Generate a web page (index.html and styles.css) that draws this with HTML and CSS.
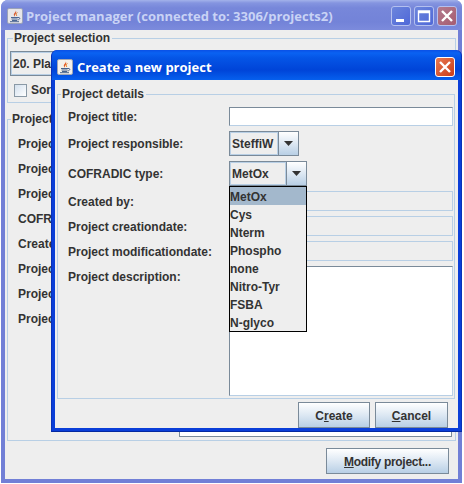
FILE: index.html
```html
<!DOCTYPE html>
<html lang="en">
<head>
    <meta charset="UTF-8">
    <title>Project manager</title>
    <link rel="stylesheet" href="styles.css">
</head>
<body>
    <svg class="defs" width="0" height="0">
        <defs>
            <symbol id="java" viewBox="0 0 16 16">
                <rect x="0.5" y="0.5" width="15" height="15" rx="1.5" fill="#f4f1ea" stroke="#9fa6b5"/>
                <path d="M8.5 2 C10 4 6 5 7 7.5 C7.5 8.5 8 8.5 8 8.5 C7 6.5 11 5.5 8.5 2 Z" fill="#e2571e"/>
                <path d="M10.5 4.5 C9 5.5 9 6.5 9.8 8" fill="none" stroke="#ee8a2c" stroke-width="1"/>
                <path d="M4 9.5 H11 M4.5 11 H10.5 M5 12.5 H10" stroke="#47638c" stroke-width="1" fill="none"/>
                <path d="M11 9.5 C13.5 9 13.5 11.5 10.5 12 M3 13.7 H12" stroke="#47638c" stroke-width="1" fill="none"/>
            </symbol>
            <symbol id="arrow" viewBox="0 0 9 5">
                <path d="M0 0 H9 L4.5 5 Z" fill="#333"/>
            </symbol>
        </defs>
    </svg>

    <div class="window">
        <div class="titlebar">
            <svg class="app-icon"><use href="#java"/></svg>
            <span class="title">Project manager (connected to: 3306/projects2)</span>
            <div class="title-buttons">
                <div class="tbtn">
                    <svg viewBox="0 0 18 18"><rect x="4" y="12" width="8" height="3" fill="#fff"/></svg>
                </div>
                <div class="tbtn">
                    <svg viewBox="0 0 18 18"><path d="M3.5 4 H14.5 V14.5 H3.5 Z M3.5 5.5 H14.5" fill="none" stroke="#fff" stroke-width="1.4"/></svg>
                </div>
                <div class="tbtn tbtn-close">
                    <svg viewBox="0 0 18 18"><path d="M4 4 L14 14 M14 4 L4 14" stroke="#fff" stroke-width="2.4"/></svg>
                </div>
            </div>
        </div>
        <div class="window-body">
            <fieldset class="group group-selection">
                <legend>Project selection</legend>
                <div class="combo combo-project">
                    <div class="combo-value">20. Plat</div>
                </div>
                <label class="check"><span class="checkbox"></span>Sort</label>
            </fieldset>
            <fieldset class="group group-project">
                <legend>Project</legend>
                <div class="outer-form">
                    <div class="outer-labels">
                        <div>Project</div>
                        <div>Project</div>
                        <div>Project</div>
                        <div>COFRAD</div>
                        <div>Created</div>
                        <div>Project</div>
                        <div>Project</div>
                        <div>Project</div>
                    </div>
                    <div class="outer-text"></div>
                </div>
            </fieldset>
            <div class="window-actions">
                <button class="btn btn-modify"><u>M</u>odify project...</button>
            </div>
        </div>
    </div>

    <div class="dialog">
        <div class="titlebar dialog-titlebar">
            <svg class="app-icon"><use href="#java"/></svg>
            <span class="title">Create a new project</span>
            <div class="title-buttons">
                <div class="tbtn tbtn-close">
                    <svg viewBox="0 0 18 18"><path d="M4 4 L14 14 M14 4 L4 14" stroke="#fff" stroke-width="2.4"/></svg>
                </div>
            </div>
        </div>
        <div class="dialog-body">
            <fieldset class="group group-details">
                <legend>Project details</legend>
                <div class="form">
                    <div class="form-label">Project title:</div>
                    <div class="input"></div>

                    <div class="form-label">Project responsible:</div>
                    <div class="combo combo-resp">
                        <div class="combo-value">SteffiW</div>
                        <div class="combo-arrow"><svg><use href="#arrow"/></svg></div>
                    </div>

                    <div class="form-label">COFRADIC type:</div>
                    <div class="combo combo-type">
                        <div class="combo-value">MetOx</div>
                        <div class="combo-arrow"><svg><use href="#arrow"/></svg></div>
                        <ul class="popup">
                            <li class="selected">MetOx</li>
                            <li>Cys</li>
                            <li>Nterm</li>
                            <li>Phospho</li>
                            <li>none</li>
                            <li>Nitro-Tyr</li>
                            <li>FSBA</li>
                            <li>N-glyco</li>
                        </ul>
                    </div>

                    <div class="form-label">Created by:</div>
                    <div class="readonly"></div>

                    <div class="form-label">Project creationdate:</div>
                    <div class="readonly"></div>

                    <div class="form-label">Project modificationdate:</div>
                    <div class="readonly"></div>

                    <div class="form-label form-label-top">Project description:</div>
                    <div class="textarea"></div>
                </div>
            </fieldset>
            <div class="dialog-actions">
                <button class="btn btn-create">C<u>r</u>eate</button>
                <button class="btn btn-cancel"><u>C</u>ancel</button>
            </div>
        </div>
    </div>
</body>
</html>
```

FILE: styles.css
```css
* {
    box-sizing: border-box;
}
html, body {
    margin: 0;
    height: 100%;
    background-color: #fff;
    overflow: hidden;
}
body {
    font-family: "Liberation Sans", Arial, sans-serif;
    font-size: 12px;
    font-weight: bold;
    color: #333;
}
.defs {
    position: absolute;
}

/* windows */
.window {
    width: 461px;
    height: 483px;
    margin-left: 1px;
    display: flex;
    flex-direction: column;
    background-color: #717fd6;
    border-radius: 7px 7px 0 0;
    padding: 0 4px 4px 4px;
}
.titlebar {
    height: 30px;
    flex: none;
    margin: 0 -4px;
    padding: 2px 5px 0 6px;
    display: flex;
    align-items: center;
    border-radius: 7px 7px 0 0;
    background: linear-gradient(#a3b2ea 0, #8494e0 3px, #7787da 8px, #7383d8 22px, #7c8bdc 30px);
}
.app-icon {
    width: 16px;
    height: 16px;
    flex: none;
    opacity: 0.9;
}
.title {
    margin-left: 3px;
    font-family: "Open Sans", sans-serif;
    font-size: 13px;
    color: #c9d3f5;
    white-space: nowrap;
}
.title-buttons {
    margin-left: auto;
    display: flex;
    gap: 3px;
}
.tbtn {
    width: 20px;
    height: 20px;
    border: 1px solid #b4c0ef;
    border-radius: 3px;
    background: linear-gradient(135deg, #6c85dc, #4f68d8);
}
.tbtn svg {
    display: block;
    width: 18px;
    height: 18px;
}
.tbtn-close {
    background: linear-gradient(135deg, #b37a8e, #a65c70);
}
.window-body {
    flex: 1;
    display: flex;
    flex-direction: column;
    background-color: #eee;
    padding: 0 2px 5px 2px;
    min-height: 0;
}

/* dialog lies over the main window */
.dialog {
    position: absolute;
    left: 51px;
    top: 50px;
    width: 411px;
    height: 382px;
    display: flex;
    flex-direction: column;
    background-color: #0a3ed8;
    border-radius: 6px 6px 0 0;
    padding: 0 3px 3px 3px;
    border-right: 1px solid #0831b8;
    border-left: 1px solid #0831b8;
    border-bottom: 1px solid #0428a0;
}
.dialog-titlebar {
    margin: 0 -3px;
    padding: 3px 6px 0 5px;
    border-radius: 6px 6px 0 0;
    background: linear-gradient(#0a50e6 0, #0a62f2 3px, #0555e6 8px, #0044d8 20px, #0660ee 30px);
}
.dialog-titlebar .app-icon {
    opacity: 1;
}
.dialog-titlebar .title {
    margin-left: 4px;
    color: #fff;
}
.dialog-titlebar .tbtn-close {
    border-color: #fff;
    background: linear-gradient(135deg, #ea7a52, #c83c18);
}
.dialog-body {
    flex: 1;
    display: flex;
    flex-direction: column;
    background-color: #eee;
    padding: 0 3px 0 2px;
    min-height: 0;
}

/* titled borders */
.group {
    margin: 0;
    padding: 0;
    border: 1px solid #b8cfe5;
    min-width: 0;
}
.group legend {
    padding: 0 2px 0 1px;
    margin-left: 3px;
    line-height: 14px;
    font-size: 12px;
}
.group-selection {
    height: 72px;
    margin-top: 1px;
    padding: 6px 2px 0 2px;
}
.group-project {
    flex: 1;
    margin-top: 9px;
    min-height: 0;
}
.window-actions {
    display: flex;
    justify-content: flex-end;
    padding: 7px 7px 0 0;
    flex: none;
}
.group-details {
    height: 312px;
    margin-top: 7px;
    padding: 0;
}
.dialog-actions {
    display: flex;
    justify-content: flex-end;
    gap: 5px;
    padding: 3px 7px 0 0;
}

/* main window contents */
.check {
    display: flex;
    align-items: center;
    margin: 7px 0 0 4px;
    gap: 4px;
}
.checkbox {
    width: 13px;
    height: 13px;
    border: 1px solid #8a99a6;
    background: linear-gradient(135deg, #d3e0ee, #fff);
}
.outer-form {
    display: flex;
    height: 100%;
    position: relative;
}
.outer-labels {
    padding: 6px 0 0 10px;
    line-height: 25px;
    white-space: nowrap;
}
.outer-text {
    position: absolute;
    left: 171px;
    right: 3px;
    bottom: 3px;
    height: 20px;
    background-color: #fff;
    border: 1px solid #7a8a99;
}

/* form */
.form {
    display: grid;
    grid-template-columns: 161px 224px;
    grid-template-rows: 19px 25px 25px 20px 20px 20px 130px;
    row-gap: 5px;
    padding: 6px 0 0 10px;
    line-height: 19px;
    align-items: center;
}
.form-label {
    padding-top: 2px;
}
.form .form-label-top {
    align-self: start;
    line-height: 20px;
    padding-top: 1px;
}
.input, .textarea, .readonly {
    align-self: stretch;
}
.input, .textarea {
    background-color: #fff;
    border: 1px solid #7a8a99;
    border-right-color: #b8cfe5;
    border-bottom-color: #b8cfe5;
}
.readonly {
    border: 1px solid #b8cfe5;
}

/* comboboxes */
.combo {
    display: flex;
    position: relative;
    height: 25px;
    border: 1px solid #7a8a99;
}
.combo-value {
    flex: 1;
    min-width: 0;
    overflow: hidden;
    white-space: nowrap;
    background-color: #eee;
    border: 1px solid #b8cfe5;
    padding-left: 1px;
    line-height: 23px;
}
.combo-arrow {
    width: 20px;
    flex: none;
    display: flex;
    align-items: center;
    justify-content: center;
    border-left: 1px solid #7a8a99;
    background: linear-gradient(#fff, #dde8f3 50%, #b8cfe5);
}
.combo-arrow svg {
    width: 9px;
    height: 5px;
}
.combo-project {
    width: 200px;
}
.combo-resp {
    width: 70px;
}
.combo-type {
    width: 78px;
}

/* dropdown list */
.popup {
    position: absolute;
    top: 24px;
    left: -1px;
    width: 78px;
    margin: 0;
    padding: 0;
    list-style: none;
    background-color: #eee;
    border: 1px solid #000;
    z-index: 2;
}
.popup li {
    height: 18px;
    line-height: 20px;
    padding-left: 0;
}
.popup .selected {
    background-color: #a3b8cc;
}

/* buttons */
.btn {
    display: block;
    height: 26px;
    padding: 1px 0 0 0;
    font: inherit;
    color: #333;
    border: 1px solid #7a8a99;
    background: linear-gradient(#fff, #dde8f3 50%, #b8cfe5);
}
.btn-create {
    width: 72px;
}
.btn-cancel {
    width: 73px;
}
.btn-modify {
    width: 123px;
    letter-spacing: -0.3px;
}
```
